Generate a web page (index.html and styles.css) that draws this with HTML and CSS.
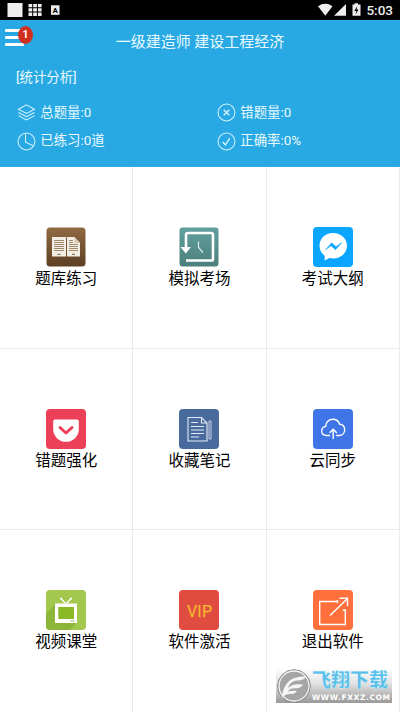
FILE: index.html
```html
<!DOCTYPE html>
<html lang="zh-CN">
<head>
<meta charset="utf-8">
<title>一级建造师 建设工程经济</title>
<link rel="stylesheet" href="styles.css">
</head>
<body>
<div class="status">
  <svg class="status-left" width="62" height="20" viewBox="0 0 62 20">
    <rect x="7.5" y="3" width="15" height="14" fill="#eee"/>
    <g fill="#eee">
      <path d="M28.500 4h3.700v3.300h-3.700zM33.200 4h3.700v3.300h-3.700zM37.900 4h3.700v3.300h-3.700zM28.500 8.300h3.700v3.300h-3.700zM33.200 8.300h3.700v3.300h-3.700zM37.900 8.300h3.700v3.300h-3.700zM28.500 12.600h3.700v3.300h-3.700zM33.200 12.600h3.700v3.300h-3.700zM37.900 12.600h3.700v3.300h-3.700z"/>
      <rect x="51" y="5.300" width="8.500" height="9.500"/>
    </g>
    <text x="55.200" y="13" text-anchor="middle" font-size="8" font-weight="700" fill="#000">A</text>
  </svg>
  <div class="status-right">
    <svg width="44" height="20" viewBox="0 0 44 20" fill="#eee">
      <path d="M0 6.200Q7.300 1.500 14.500 6.200L7.300 15.700z"/>
      <path d="M28 4v11.700H16z"/>
      <path d="M34.500 4.500h2V3.200h3.500v1.300h2.500v11.300h-8z"/>
      <path d="M39.300 6l-3 5h2l-.7 3.300 3-4.800h-2z" fill="#000"/>
    </svg>
    <span class="clock">5:03</span>
  </div>
</div>
<header class="header">
  <div class="bar">
    <div class="menu"><i></i><i></i><i></i><b class="badge">1</b></div>
    <h1>一级建造师 建设工程经济</h1>
  </div>
  <div class="caption">[统计分析]</div>
  <div class="stats">
    <div class="stat"><svg viewBox="0 0 20 20"><path d="M10 2l8.500 4.500L10 11 1.500 6.500zM1.500 10l8.500 4.500 8.500-4.500M1.500 13.300l8.500 4.500 8.500-4.500"/></svg>总题量:0</div>
    <div class="stat"><svg viewBox="0 0 20 20"><circle cx="10" cy="10" r="8.900"/><path d="M7 7l6 6M13 7l-6 6" stroke-width="1.500"/></svg>错题量:0</div>
    <div class="stat"><svg viewBox="0 0 20 20"><circle cx="10" cy="10" r="8.900"/><path d="M9 1.500v9.300l8.200 3.700"/></svg>已练习:0道</div>
    <div class="stat"><svg viewBox="0 0 20 20"><circle cx="10" cy="10" r="8.900"/><path d="M6 10.500l2.800 3 4.700-7" stroke-width="1.400"/></svg>正确率:0%</div>
  </div>
</header>
<main class="grid">
  <div class="cell">
    <svg viewBox="0 0 40 40">
      <defs><linearGradient id="brown" x2="0" y2="1"><stop stop-color="#8f6a43"/><stop offset="1" stop-color="#5e3f23"/></linearGradient></defs>
      <rect x=".5" y=".5" width="39" height="39" rx="3.500" fill="url(#brown)"/>
      <path d="M6 10h14v19.500H6zM21 10h7.500l5.500 6v13.500H21z" fill="#f3eee5"/>
      <path d="M28.500 10v6H34z" fill="#d8c8b0"/>
      <path d="M8 13.500h10M8 15.500h10M8 17.500h10M8 19.500h10M8 21.500h10M8 23.500h10M23 13.500h4M23 15.500h4M23 17.500h9M23 19.500h9M23 21.500h9M23 23.500h9" stroke="#a18b6c"/>
      <path d="M11.500 27.300h3M26 27.300h3" stroke="#7b5c38"/>
    </svg>
    <span>题库练习</span>
  </div>
  <div class="cell">
    <svg viewBox="0 0 40 40">
      <defs><linearGradient id="teal" x2="0" y2="1"><stop stop-color="#60a09d"/><stop offset="1" stop-color="#4c7f7d"/></linearGradient></defs>
      <rect x=".5" y=".5" width="39" height="39" rx="3" fill="url(#teal)"/>
      <path d="M7 22V8q0-2 2-2h23q2 0 2 2v24.500q0 1-1 1H7" fill="none" stroke="#fff" stroke-width="2.600"/>
      <path d="M1.500 20h10.500l-5.200 6.500z" fill="#fff"/>
      <path d="M19.500 14.500v6l4.500 5" fill="none" stroke="#dcebea" stroke-width="1.200"/>
    </svg>
    <span>模拟考场</span>
  </div>
  <div class="cell">
    <svg viewBox="0 0 40 40">
      <rect width="40" height="40" rx="4" fill="#0aa5ff"/>
      <path d="M20 6C12 6 6.500 11.500 6.500 18.800c0 4.200 2 7.700 5.200 10v4.600l4.600-2.400c1.200.3 2.400.5 3.700.5 8 0 14-5.500 14-12.700S28 6 20 6z" fill="#fff"/>
      <path d="M12.500 22.700l6.200-7 4.300 4 5.700-4-6.200 7-4.500-4z" fill="#0aa5ff" stroke="#0aa5ff" stroke-width=".5"/>
    </svg>
    <span>考试大纲</span>
  </div>
  <div class="cell">
    <svg viewBox="0 0 40 40">
      <rect width="40" height="40" rx="4" fill="#ec4058"/>
      <path d="M9 10.500h22q1.800 0 1.800 1.800v8a12.800 12.500 0 0 1-25.600 0v-8q0-1.800 1.800-1.800z" fill="#fff"/>
      <path d="M14 18.500l6 5.500 6-5.500" fill="none" stroke="#ec4058" stroke-width="3" stroke-linecap="round" stroke-linejoin="round"/>
    </svg>
    <span>错题强化</span>
  </div>
  <div class="cell">
    <svg viewBox="0 0 40 40">
      <rect width="40" height="40" rx="4" fill="#496a9c"/>
      <g fill="none" stroke="#e3ebf6" stroke-width="1.100"><path d="M9 8.500h13.500L28 14v18H9zM22.500 8.500V14H28M12 13.500h7M12 17.500h13M12 21h13M12 24.500h13M12 28h8"/><path d="M30 12v18h2V12z" stroke-width=".8"/></g>
    </svg>
    <span>收藏笔记</span>
  </div>
  <div class="cell">
    <svg viewBox="0 0 40 40">
      <rect width="40" height="40" rx="4" fill="#3f75e6"/>
      <g fill="none" stroke="#fff" stroke-width="1.400" stroke-linecap="round"><path d="M16.500 26.500h-3C10.500 26.500 8.700 24.500 8.700 22c0-2.600 1.800-4.300 4-4.600C12.700 13 16 10.300 19.700 10.300c3.500 0 6 2 7 5 3-.2 5 2.300 5 5.400 0 3.400-2.300 5.800-5.500 5.800h-2.700"/><path d="M20.200 29.500v-9M17 23.500l3.200-3.200 3.200 3.200"/></g>
    </svg>
    <span>云同步</span>
  </div>
  <div class="cell">
    <svg viewBox="0 0 40 40">
      <rect width="40" height="40" rx="4" fill="#a2c84f"/>
      <path d="M0 24L9 14l21 19-6 7H4q-4 0-4-4z" fill="#8db53a"/>
      <rect x="9" y="13.500" width="22" height="19.500" fill="#fff"/>
      <rect x="12.300" y="17" width="15.700" height="12" fill="#8ab926"/>
      <path d="M19.500 13.500L15 8.500M20.500 13.500L25 8.500" stroke="#fff" stroke-width="1.300"/>
      <circle cx="15" cy="8.500" r="1.100" fill="#fff"/><circle cx="25" cy="8.500" r="1.100" fill="#fff"/>
      <path d="M24.500 31h4" stroke="#91b64d"/>
    </svg>
    <span>视频课堂</span>
  </div>
  <div class="cell">
    <svg viewBox="0 0 40 40">
      <rect width="40" height="40" rx="4" fill="#e14c40"/>
      <text x="20.500" y="26.500" text-anchor="middle" font-size="16" textLength="25" fill="#f6b52e" stroke="#f6b52e" stroke-width=".25">VIP</text>
    </svg>
    <span>软件激活</span>
  </div>
  <div class="cell">
    <svg viewBox="0 0 40 40">
      <rect width="40" height="40" rx="4" fill="#ff703d"/>
      <path d="M24.500 11.500H6.700v23h25.600V20h-2.500M24.500 10v3M17 25.500L34 9M26.500 8.300h8v8" fill="none" stroke="#fff" stroke-width="1.400"/>
    </svg>
    <span>退出软件</span>
  </div>
</main>
<div class="mark">
  <svg width="36" height="36" viewBox="0 0 36 36">
    <circle cx="18" cy="18" r="16.300" fill="#a5a5a5" stroke="#858585"/>
    <circle cx="18" cy="18" r="15" fill="none" stroke="#f4f4f4" stroke-width="1.300"/>
    <path d="M6 27C9 14 15 8 30 8.500c-2 3.500-5 4-9 4-5 .3-8 4-9 8 4-4.500 8-4.500 15-4-2 3.500-5 3.800-8 3.800-4 0-6 1-7 3.200 3-1 6-1 9-.5-2 3-5 3-7.500 3-3 0-5 1-7.500 4z" fill="#f5f5f5"/>
  </svg>
  <div class="mark-text"><b>飞翔下载</b><em>WWW.FXXZ.COM</em></div>
</div>
</body>
</html>
```
FILE: styles.css
```css
* { box-sizing: border-box; }
body {
  margin: 0;
  width: 400px;
  height: 712px;
  overflow: hidden;
  position: relative;
  display: flex;
  flex-direction: column;
  background: #fff;
  font-family: Roboto, "Noto Sans CJK SC", sans-serif;
}
svg { display: block; flex: none; }
.status {
  height: 20px;
  flex: none;
  background: #000;
  display: flex;
  justify-content: space-between;
}
.status-right { display: flex; padding-right: 7px; gap: 4px; }
.clock { color: #eee; font-size: 13.5px; line-height: 21px; font-weight: 500; }
.header {
  height: 147px;
  flex: none;
  background: #29a9e3;
  color: #e9faff;
}
.bar { height: 42px; position: relative; }
.bar h1 {
  margin: 0;
  font-size: 15px;
  font-weight: 400;
  line-height: 44px;
  text-align: center;
}
.menu {
  position: absolute;
  left: 5px;
  top: 9px;
  width: 19px;
  display: flex;
  flex-direction: column;
  gap: 4.500px;
}
.menu i { height: 2.700px; border-radius: 1px; background: #fff; }
.badge {
  position: absolute;
  left: 13px;
  top: -3px;
  width: 15px;
  height: 18px;
  border-radius: 50%;
  background: #d0301f;
  color: #fff;
  font-size: 10.500px;
  line-height: 18px;
  text-align: center;
}
.caption { padding-left: 16px; font-size: 13.400px; line-height: 32px; height: 30px; }
.stats {
  padding: 6.400px 0 0 17px;
  display: grid;
  grid-template-columns: 200px 1fr;
  grid-auto-rows: 28.700px;
}
.stat { display: flex; align-items: center; gap: 4.300px; font-size: 13.400px; line-height: 18px; }
.stat svg {
  width: 19px;
  height: 19px;
  fill: none;
  stroke: #d3f3ff;
  stroke-width: 1.100;
}
.grid {
  flex: 1;
  display: grid;
  grid-template-columns: repeat(3, 133.300px);
  grid-template-rows: repeat(3, 1fr);
}
.cell {
  border-right: 1px solid #ebebeb;
  border-bottom: 1px solid #ebebeb;
  display: flex;
  flex-direction: column;
  align-items: center;
  padding-top: 60px;
  font-size: 15.500px;
  line-height: 24px;
  color: #000;
}
.cell:nth-child(n+7) { border-bottom: 0; }
.cell svg { width: 40px; height: 40px; }
.mark {
  position: absolute;
  left: 276px;
  top: 668px;
  width: 116px;
  height: 35px;
  display: flex;
  background: linear-gradient(#fff 0%, #e1e1e1 45%, #999 100%);
}
.mark-text { flex: 1; display: flex; flex-direction: column; }
.mark b {
  font-size: 19px;
  line-height: 26px;
  font-weight: 900;
  color: #58bfe9;
  white-space: nowrap;
  -webkit-text-stroke: .3px #e7f9ff;
}
.mark em {
  font: 700 7.500px/7px "DejaVu Sans", sans-serif;
  color: #fff;
  white-space: nowrap;
  letter-spacing: .6px;
}
```
